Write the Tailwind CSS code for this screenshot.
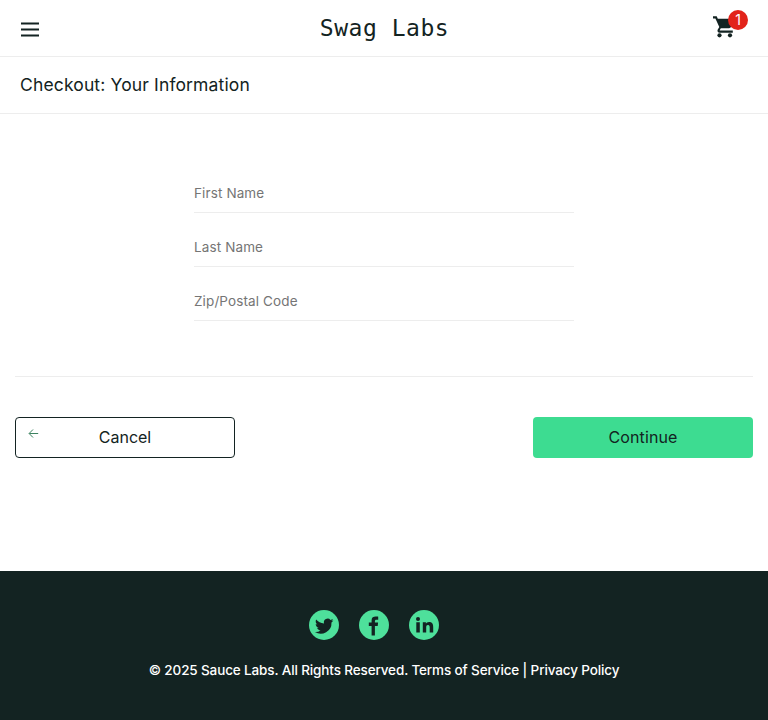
<!DOCTYPE html>
<html lang="en">
<head>
<meta charset="utf-8">
<title>Swag Labs</title>
<script src="https://cdn.jsdelivr.net/npm/@tailwindcss/browser@4"></script>
</head>
<body class="flex h-[720px] flex-col overflow-hidden bg-white font-['Inter','Liberation_Sans',sans-serif] text-[#132322]">
<header>
  <div class="flex h-[57px] items-center justify-between border-b border-[#ededed] pl-[21px] pr-5">
    <button class="w-[35px]" aria-label="Open Menu">
      <svg class="mt-[3px] block h-[15px] w-[18px]" viewBox="0 0 18 15" fill="#132322"><path d="M0 .4h18v2.1H0zM0 6.4h18v2.1H0zM0 12.4h18v2.1H0z"/></svg>
    </button>
    <div class="font-['DejaVu_Sans_Mono',monospace] text-[23px] leading-[56px] tracking-[.53px] whitespace-pre">Swag Labs</div>
    <a class="relative block h-[40px] w-[35px]" aria-label="Cart">
      <svg class="absolute top-[8px] left-0 h-[22px] w-[22px]" viewBox="0 0 22 22" fill="#132322"><path d="M0 .3h3.700l1.100 2.400H21c.8 0 1.200.8.8 1.400l-3.800 7c-.4.7-1 1.100-1.900 1.100H7.800l-1 1.900c-.1.3 0 .5.3.5h12.700v2.100H6.600c-1.700 0-2.600-1.700-1.800-3.100l1.500-2.600L2.400 2.500H0z"/><circle cx="6.500" cy="19.300" r="2.100"/><circle cx="17" cy="19.300" r="2.100"/></svg>
      <span class="absolute top-[2px] left-[15px] flex size-5 items-center justify-center rounded-full bg-[#e2231a] text-[14px] leading-5 text-white">1</span>
    </a>
  </div>
  <div class="flex h-[57px] items-center border-b border-[#ededed] px-5">
    <h1 class="text-[17.5px] leading-6 font-normal tracking-[.14px] whitespace-nowrap">Checkout: Your Information</h1>
  </div>
</header>
<main class="flex-1 px-[15px] pt-[61px]">
  <form class="mx-auto flex w-[380px] flex-col gap-[16px]">
    <input class="h-[38px] w-full border-b border-[#ededed] pb-0.5 text-[13.5px] tracking-[.12px] outline-none placeholder:text-[#757575]" placeholder="First Name">
    <input class="h-[38px] w-full border-b border-[#ededed] pb-0.5 text-[13.5px] tracking-[.12px] outline-none placeholder:text-[#757575]" placeholder="Last Name">
    <input class="h-[38px] w-full border-b border-[#ededed] pb-0.5 text-[13.5px] tracking-[.12px] outline-none placeholder:text-[#757575]" placeholder="Zip/Postal Code">
  </form>
  <div class="mt-[55px] flex justify-between border-t border-[#ededed] pt-10">
    <button class="relative h-[41px] w-[220px] rounded border border-[#132322] pb-0.5 text-[16px] leading-6">
      <svg class="absolute top-[11px] left-[12px] h-[10px] w-[11px]" viewBox="0 0 11 10" fill="none" stroke="#3c8260"><path d="M10.200 4.500H1.300M5 .5L1.100 4.500L5 8.500"/></svg>
      <span>Cancel</span>
    </button>
    <button class="h-[41px] w-[220px] rounded bg-[#3ddc91] pb-0.5 text-[16px] leading-6 tracking-[.1px]"><span>Continue</span></button>
  </div>
</main>
<footer class="flex h-[149px] flex-col items-center bg-[#132322] pt-[39px] text-white">
  <div class="mr-5 flex gap-5">
    <svg class="size-[30px]" viewBox="0 0 30 30"><circle cx="15" cy="15" r="15" fill="#4ee09b"/><path fill="#132322" d="M24.400 9.700c-.7.300-1.400.5-2.100.6.8-.5 1.300-1.200 1.600-2.100-.7.400-1.500.7-2.400.9a3.800 3.800 0 0 0-6.500 3.500c-3.200-.2-6-1.700-7.800-4-1 1.700-.5 3.900 1.200 5.100-.6 0-1.200-.2-1.700-.5 0 1.900 1.300 3.400 3 3.800-.6.100-1.100.1-1.700 0 .5 1.500 1.900 2.600 3.500 2.600a7.700 7.700 0 0 1-5.600 1.600 10.800 10.800 0 0 0 16.600-9.600c.7-.5 1.400-1.200 1.900-1.900z" transform="translate(0 .8)"/></svg>
    <svg class="size-[30px]" viewBox="0 0 30 30"><circle cx="15" cy="15" r="15" fill="#4ee09b"/><path fill="#132322" d="M12.600 25.500v-9.500H9.800v-3.500h2.800v-2.300c0-2.700 1.700-3.600 4.100-3.600 1.200 0 2.200.1 2.500.1v3.100h-1.700c-1.300 0-1.600.6-1.600 1.600v1.100h3.200l-.4 3.500h-2.800v9.500z"/></svg>
    <svg class="size-[30px]" viewBox="0 0 30 30"><circle cx="15" cy="15" r="15" fill="#4ee09b"/><circle cx="9" cy="8.900" r="2" fill="#132322"/><path fill="#132322" d="M7.300 12.300h3.500v10.200H7.300zM13.800 12.300h3.100v1.400c.5-.9 1.600-1.700 3.200-1.700 3.300 0 4.100 2.200 4.100 5.200v5.300h-3.500v-4.700c0-1.200 0-2.800-1.700-2.800s-1.800 1.300-1.800 2.700v4.800h-3.400z"/></svg>
  </div>
  <div class="mt-[20px] text-[13.5px] leading-5 font-[450] tracking-[-.13px] whitespace-nowrap">© 2025 Sauce Labs. All Rights Reserved. Terms of Service | Privacy Policy</div>
</footer>
</body>
</html>
